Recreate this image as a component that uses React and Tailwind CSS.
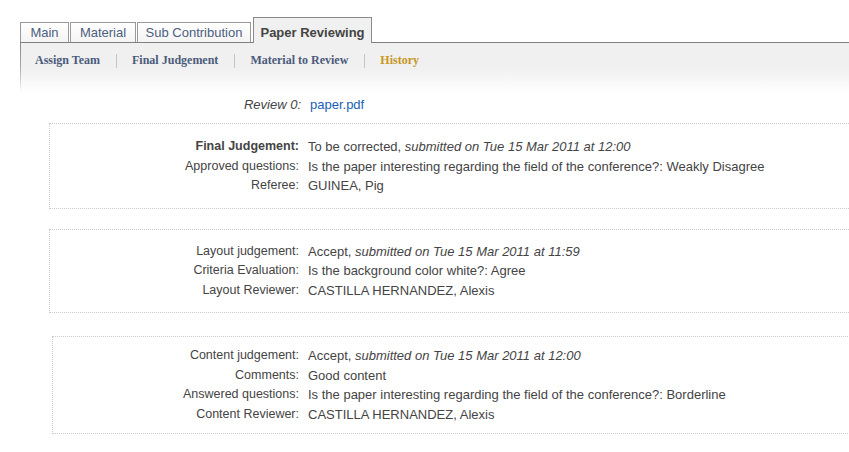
const tabs = [
  { label: 'Main', w: 'w-[49px]' },
  { label: 'Material', w: 'w-[66px]' },
  { label: 'Sub Contribution', w: 'w-[114px]' },
];

const subnav = ['Assign Team', 'Final Judgement', 'Material to Review'];

const boxes = [
  {
    cls: 'mt-[9px] ml-[49px]',
    labelW: 'w-[249px]',
    py: 'pt-[13px] pb-[12px]',
    rows: [
      { label: 'Final Judgement:', bold: true, value: 'To be corrected, ', em: 'submitted on Tue 15 Mar 2011 at 12:00' },
      { label: 'Approved questions:', value: 'Is the paper interesting regarding the field of the conference?: Weakly Disagree' },
      { label: 'Referee:', value: 'GUINEA, Pig' },
    ],
  },
  {
    cls: 'mt-[20px] ml-[49px]',
    labelW: 'w-[249px]',
    py: 'pt-[12px] pb-[12px]',
    rows: [
      { label: 'Layout judgement:', value: 'Accept, ', em: 'submitted on Tue 15 Mar 2011 at 11:59' },
      { label: 'Criteria Evaluation:', value: 'Is the background color white?: Agree' },
      { label: 'Layout Reviewer:', value: 'CASTILLA HERNANDEZ, Alexis' },
    ],
  },
  {
    cls: 'mt-[23px] ml-[52px]',
    labelW: 'w-[246px]',
    py: 'pt-[9px] pb-[9px]',
    rows: [
      { label: 'Content judgement:', value: 'Accept, ', em: 'submitted on Tue 15 Mar 2011 at 12:00' },
      { label: 'Comments:', value: 'Good content' },
      { label: 'Answered questions:', value: 'Is the paper interesting regarding the field of the conference?: Borderline' },
      { label: 'Content Reviewer:', value: 'CASTILLA HERNANDEZ, Alexis' },
    ],
  },
];

export default function App() {
  return (
    <div
      className="w-[849px] h-[452px] overflow-hidden bg-white text-[13px] text-[#444]"
      style={{ fontFamily: '"Liberation Sans", Arial, sans-serif' }}
    >
      <div className="pt-[17px] pl-[20px]">
        {/* tabs */}
        <div className="flex items-end gap-[1px]">
          {tabs.map((t) => (
            <div
              key={t.label}
              className={`${t.w} h-[20px] border border-b-0 border-[#9a9a9a] bg-gradient-to-b from-white to-[#f4f4f4] text-center leading-[20px] text-[#4d5e7e]`}
            >
              {t.label}
            </div>
          ))}
          <div className="relative z-10 -mb-px ml-[1px] w-[119px] h-[26px] border border-b-0 border-[#8a8a8a] bg-[#f0f0f0] text-center leading-[30px] font-bold text-[#444]">
            Paper Reviewing
          </div>
        </div>

        {/* sub navigation */}
        <div className="flex border-t border-[#808080]">
          <div className="w-px h-[50px] bg-gradient-to-b from-[#8a8a8a] via-[#aaaaaa] to-white" />
          <div className="flex-1 h-[50px] bg-gradient-to-b from-[#f0f0f0] via-[#f0f0f0] to-white flex items-start pt-[9px] pl-[14px]">
            <div
              className="flex items-center text-[12px] font-bold leading-[17px]"
              style={{ fontFamily: '"Liberation Serif", "Times New Roman", serif' }}
            >
              {subnav.map((s) => (
                <div key={s} className="flex items-center">
                  <span className="text-[#4b5b7b]">{s}</span>
                  <span className="ml-[16px] mr-[15px] w-px h-[14px] bg-[#c4c4c4]" />
                </div>
              ))}
              <span className="text-[#c8961e]">History</span>
            </div>
          </div>
        </div>
      </div>

      {/* review link */}
      <div className="flex leading-[19px] mt-[2px]">
        <div className="w-[301px] text-right italic">Review 0:</div>
        <a className="ml-[9px] text-[#1a5fb4]">paper.pdf</a>
      </div>

      {boxes.map((b, i) => (
        <div key={i} className={`${b.cls} w-[820px] border border-dotted border-[#cccccc] ${b.py}`}>
          {b.rows.map((r) => (
            <div key={r.label} className="flex items-center h-[19.5px] leading-[19px]">
              <div className={`${b.labelW} shrink-0 text-right text-[12.5px] ${r.bold ? 'font-bold' : ''}`}>{r.label}</div>
              <div className="ml-[9px] whitespace-nowrap">
                {r.value}
                {r.em && <em>{r.em}</em>}
              </div>
            </div>
          ))}
        </div>
      ))}
    </div>
  );
}
